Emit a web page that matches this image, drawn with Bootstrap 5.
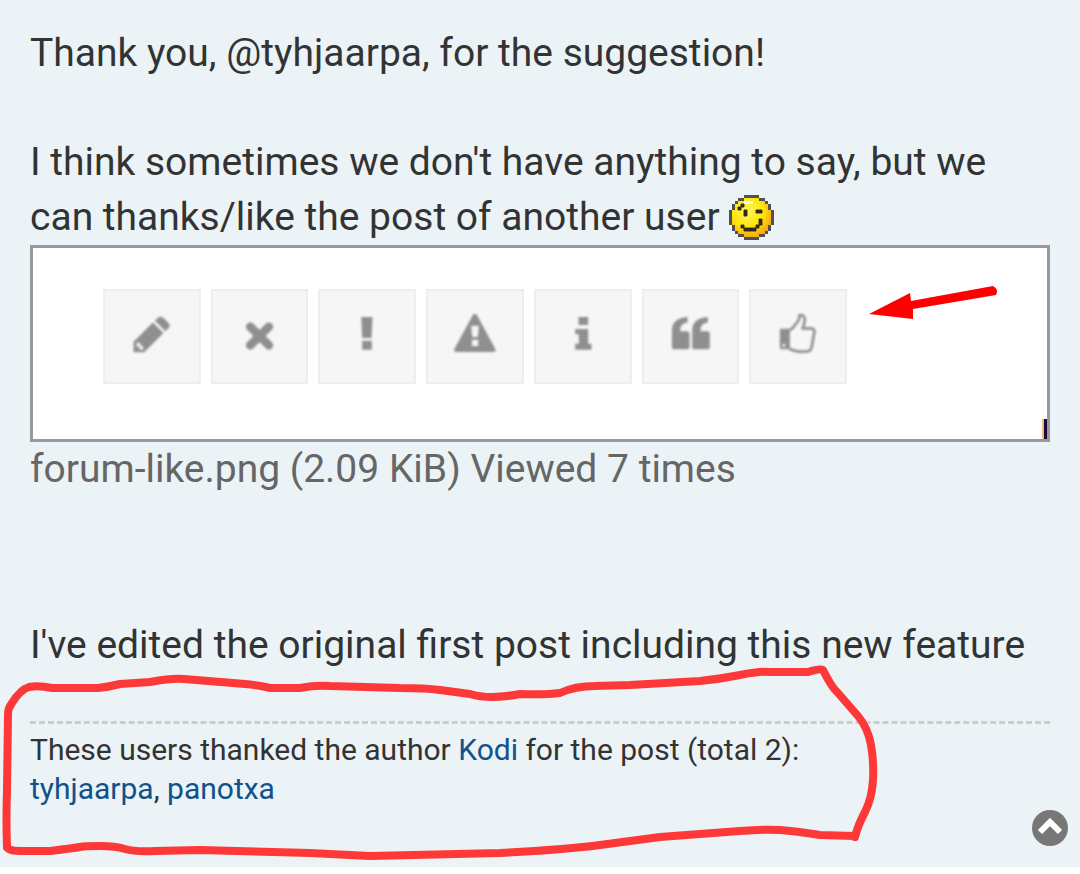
<!DOCTYPE html>
<html lang="en">
<head>
<meta charset="utf-8">
<meta name="viewport" content="width=device-width, initial-scale=1">
<title>Forum post</title>
<link rel="stylesheet" href="https://cdn.jsdelivr.net/npm/bootstrap@5.3.0/dist/css/bootstrap.min.css">
<style>
  body { font-family: Roboto, "Liberation Sans", sans-serif; background: #fff; color: #333; }
  .post { background: #ebf3f7; padding: 26px 30px 59px; }
  .post-text { font-size: 39px; line-height: 55px; }
  .post-text p { margin-bottom: 54px; }
  .post-text p.lead-in { margin-bottom: 0; }
  .smiley { width: 45px; height: 45px; vertical-align: -10px; }
  .attachment { margin-bottom: 121px; }
  .shot { border: 3px solid #999; background: #fff; height: 197px; padding: 41px 40px 0 70px; }
  .tools { flex: 0 1 744px; gap: 10px; }
  .tool { flex: 1 1 0; height: 95px; padding: 0; border: 2px solid #eee; background: #f6f6f6; color: #8f8f8f; }
  .tool svg { display: block; width: 100%; height: 100%; filter: blur(1px); }
  .arrow { width: 132px; height: 40px; margin-left: 21px; overflow: visible; }
  .edge { right: 0; bottom: 0; width: 5px; height: 20px; background: #1a0a3c; border-left: 2px solid #f2c078; }
  .attachment figcaption { color: #666; }
  .thanks { border-top: 3px dashed #ccc; margin-top: 48px; padding-top: 6px; font-size: 30px; line-height: 39px; }
  .thanks a { color: #105289; text-decoration: none; }
  .scribble { left: -30px; top: -67px; width: 880px; height: 210px; pointer-events: none; }
  .to-top { right: 12px; top: 810px; width: 36px; height: 36px; }
  .to-top svg { display: block; }
</style>
</head>
<body>
<main class="post">
  <div class="post-text">
    <p>Thank you, @tyhjaarpa, for the suggestion!</p>
    <p class="lead-in">I think sometimes we don't have anything to say, but we can thanks/like the post of another user
      <svg class="smiley" viewBox="0 0 15 15" role="img" aria-label="Wink">
        <defs><radialGradient id="face" cx=".4" cy=".35" r=".65"><stop offset="0" stop-color="#fff45c"/><stop offset=".6" stop-color="#ffe60c"/><stop offset="1" stop-color="#f5ad10"/></radialGradient></defs>
        <path fill="#505050" d="M5 0h5v1h2v1h1v1h1v2h1v5h-1v2h-1v1h-1v1h-2v1H5v-1H3v-1H2v-1H1v-2H0V5h1V3h1V2h1V1h2z"/>
        <path fill="url(#face)" d="M5 1h5v1h2v1h1v2h1v5h-1v2h-1v1h-2v1H5v-1H3v-1H2v-2H1V5h1V3h1V2h2z"/>
        <path fill="#fffbd0" d="M5 2h3v1H5z"/>
        <path fill="#30281a" stroke="#30281a" stroke-width=".3" stroke-linejoin="round" d="M4 3h1v1H4zM3 4h1v1H3zM5 5h1v2H5zM9 5h2v1H9zM4 10h1v1H4zM5 11h4v1H5zM9 10h1v1H9zM10 8h1v2h-1z"/>
      </svg></p>
    <figure class="attachment">
      <div class="shot position-relative d-flex align-items-start">
        <div class="tools d-flex">
          <button class="tool" type="button" aria-label="Edit"><svg viewBox="6 6 282 273" fill="currentColor"><path fill-rule="evenodd" d="M92 190v-32l58-58 32 32-58 58zM101 164v9h9v9h8l5-5-17-18z"/><path d="M156 94l11-9q7-5 14 1l16 16q7 7 1 14l-10 11z"/></svg></button>
          <button class="tool" type="button" aria-label="Delete"><svg viewBox="6 6 282 273" fill="none" stroke="currentColor" stroke-width="26" stroke-linecap="round"><path d="M118 113l56 56M174 113l-56 56"/></svg></button>
          <button class="tool" type="button" aria-label="Report"><svg viewBox="6 6 282 273" fill="currentColor"><path d="M130 84h34l-3 63h-28zM133 155h29v27h-29z"/></svg></button>
          <button class="tool" type="button" aria-label="Warn"><svg viewBox="6 6 282 273" fill="currentColor"><path fill-rule="evenodd" d="M140 79q7-8 14 0l55 102q2 8-6 8H91q-8 0-6-8zM136 110l3 34h17l3-34zM138 152v19h19v-19z"/></svg></button>
          <button class="tool" type="button" aria-label="Information"><svg viewBox="6 6 282 273" fill="currentColor"><path d="M134 84h29v24h-29zM124 120h39v44h10v18h-49v-18h11v-28h-11z"/></svg></button>
          <button class="tool" type="button" aria-label="Quote"><svg viewBox="6 6 282 273" fill="currentColor"><path d="M137 84v16q-22 3-22 22v5h20q8 0 8 8v38q0 8-8 8H98q-8 0-8-8v-49q0-36 47-40z"/><path d="M198 84v16q-22 3-22 22v5h20q8 0 8 8v38q0 8-8 8h-37q-8 0-8-8v-49q0-36 47-40z"/></svg></button>
          <button class="tool" type="button" aria-label="Like"><svg viewBox="6 6 282 273" fill="none" stroke="currentColor" stroke-width="8" stroke-linejoin="round"><path d="M122 123q8-2 14-12l10-13q5-4 6-20q14-2 16 13q0 10-7 27h28q10 2 7 15l-8 44q-3 11-17 11h-18q-14-1-31-8"/><path fill="currentColor" stroke="none" fill-rule="evenodd" d="M97 119h26v62H97q-4 0-4-4v-54q0-4 4-4zM101 165v8h8v-8z"/></svg></button>
        </div>
        <svg class="arrow flex-shrink-0" viewBox="0 0 132 40" aria-hidden="true"><path fill="#f00" d="M1 25L42 4l1 8L125-3q6 3 3 9L45 20v10z"/></svg>
        <span class="edge position-absolute"></span>
      </div>
      <figcaption>forum-like.png (2.09 KiB) Viewed 7 times</figcaption>
    </figure>
    <div>I've edited the original first post including this new feature</div>
  </div>
  <section class="thanks position-relative">
    <div>These users thanked the author <a href="#">Kodi</a> for the post (total 2):</div>
    <div><a href="#">tyhjaarpa</a>, <a href="#">panotxa</a></div>
    <svg class="scribble position-absolute" viewBox="0 657 880 210" fill="none" stroke="#fd3838" stroke-width="8" stroke-linejoin="round" stroke-linecap="round" aria-hidden="true">
      <path d="M7 847Q6 820 7 790L8 714Q8 708 12 703Q20 690 29 687Q38 685 52 688L98 688Q108 687 120 684L150 682Q172 678 184 679L245 684Q258 685 270 688L300 688Q315 685 330 686L400 688Q425 688 440 690T470 694Q480 697 492 697T520 694Q545 695 560 693Q575 686 595 686L630 685L700 681Q720 679 740 675T770 672L808 672Q820 668 823 670Q832 688 838 693L858 716Q868 728 871 745T873 780T865 812Q858 825 855 837"/>
      <path d="M855 836L820 835Q795 831 780 830T740 831L660 837L600 845Q560 850 500 853L370 856L310 853L200 850L155 851Q135 852 125 849T100 846T80 847T50 851L20 851Q7 851 7 846"/>
    </svg>
  </section>
</main>
<a class="to-top position-fixed" href="#" aria-label="Back to top"><svg viewBox="0 0 36 36" width="36" height="36"><circle cx="18" cy="18" r="18" fill="#777"/><path d="M8 22l10-10 10 10" fill="none" stroke="#fff" stroke-width="6"/></svg></a>
<script src="https://cdn.jsdelivr.net/npm/bootstrap@5.3.0/dist/js/bootstrap.bundle.min.js"></script>
</body>
</html>
